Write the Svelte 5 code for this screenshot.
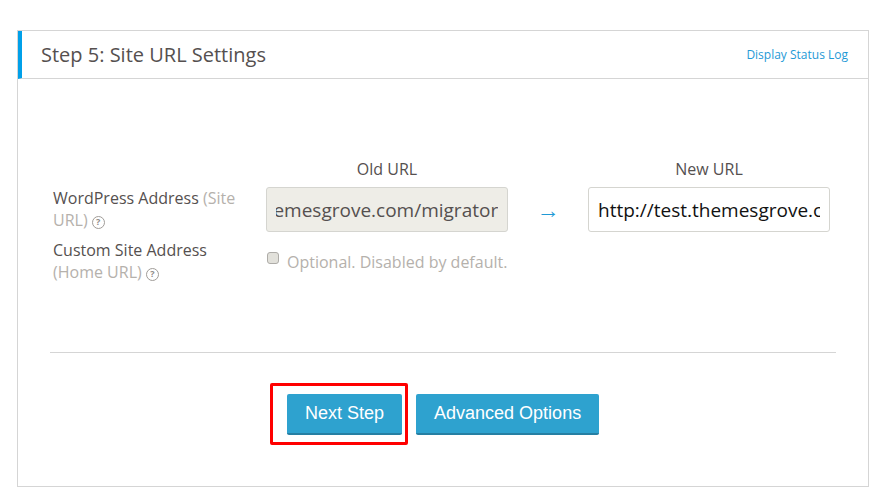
<script>
    import { onMount } from "svelte";

    let oldInput;

    onMount(() => {
        oldInput.scrollLeft = oldInput.scrollWidth;
    });
</script>

<main class="panel">
    <header>
        <h2>Step 5: Site URL Settings</h2>
        <a href="#log" class="log">Display Status Log</a>
    </header>

    <div class="body">
        <div class="form">
            <div class="col-heads">
                <span class="head old">Old URL</span>
                <span class="head new">New URL</span>
            </div>
            <div class="row first">
                <div class="label">
                    WordPress Address <span class="muted">(Site</span>
                    <span class="muted">URL)</span>
                    <span class="help">?</span>
                </div>
                <input
                    class="url readonly"
                    bind:this={oldInput}
                    readonly
                    value="http://test.themesgrove.com/migrator"
                />
                <span class="arrow">→</span>
                <input class="url" value="http://test.themesgrove.com" />
            </div>
            <div class="row second">
                <div class="label">
                    Custom Site Address <span class="muted">(Home URL)</span>
                    <span class="help">?</span>
                </div>
                <label class="optional">
                    <input type="checkbox" />
                    <span>Optional. Disabled by default.</span>
                </label>
            </div>
        </div>

        <hr />

        <div class="actions">
            <div class="highlight">
                <button>Next Step</button>
            </div>
            <button>Advanced Options</button>
        </div>
    </div>
</main>

<style>
    :global(body) {
        background: #fff;
        font-family: "Open Sans", sans-serif;
    }

    .panel {
        box-sizing: border-box;
        width: 852px;
        height: 457px;
        margin: 30px 0 0 17px;
        border: 1px solid #d5d5d5;
    }

    header {
        box-sizing: border-box;
        height: 48px;
        display: flex;
        align-items: center;
        justify-content: space-between;
        border-left: 4px solid #00a0e9;
        border-bottom: 1px solid #d5d5d5;
        padding: 0 20px 0 19px;
    }

    h2 {
        margin: 0;
        font-size: 20px;
        font-weight: 400;
        color: #55504f;
    }

    .log {
        font-size: 12px;
        color: #1f9ad6;
        text-decoration: none;
    }

    .body {
        padding: 0 32px;
    }

    .form {
        padding: 77px 6px 0 3px;
        height: 196px;
    }

    .col-heads {
        display: flex;
        height: 31px;
        padding-left: 213px;
        font-size: 16px;
        line-height: 27px;
        color: #55504f;
    }

    .head {
        width: 242px;
        text-align: center;
    }

    .head.new {
        margin-left: 80px;
    }

    .row {
        display: flex;
        align-items: flex-start;
    }

    .row.first {
        height: 52px;
    }

    .label {
        width: 213px;
        font-size: 16px;
        line-height: 22px;
        color: #55504f;
        flex: none;
        padding-right: 20px;
        box-sizing: border-box;
    }

    .muted {
        color: #b5b1ac;
    }

    .help {
        display: inline-block;
        box-sizing: border-box;
        width: 13px;
        height: 13px;
        border: 1.5px solid #a09c98;
        border-radius: 50%;
        font-size: 9px;
        font-weight: 700;
        line-height: 10px;
        text-align: center;
        color: #8f8b87;
        vertical-align: 1px;
    }

    .url {
        box-sizing: border-box;
        width: 242px;
        height: 45px;
        padding: 0 9px;
        border: 1px solid #d5d5d0;
        border-radius: 3px;
        background: #fff;
        font-family: "Open Sans", sans-serif;
        font-size: 19px;
        color: #111;
        outline: none;
    }

    .url.readonly {
        background: #eeede7;
        color: #55504f;
    }

    .arrow {
        width: 80px;
        flex: none;
        text-align: center;
        font-family: "Liberation Sans", sans-serif;
        font-size: 23px;
        line-height: 46px;
        color: #1f9ad6;
    }

    .optional {
        display: flex;
        align-items: flex-start;
        gap: 8px;
        padding: 12px 0 0 1px;
        font-size: 16px;
        line-height: 22px;
        color: #b5b1ac;
    }

    .optional input {
        appearance: none;
        box-sizing: border-box;
        width: 12px;
        height: 12px;
        margin: 1px 0 0;
        flex: none;
        background: #e2e1db;
        border: 1px solid #aeaca8;
        border-radius: 3px;
    }

    hr {
        margin: 0;
        border: 0;
        border-top: 1px solid #d5d5d5;
    }

    .actions {
        display: flex;
        gap: 14px;
        padding: 41px 0 0 237px;
    }

    .highlight {
        position: relative;
    }

    .highlight::after {
        content: "";
        position: absolute;
        left: -17px;
        top: -11px;
        width: 138px;
        height: 62px;
        box-sizing: border-box;
        border: 3px solid #f00;
        border-radius: 2px;
        pointer-events: none;
    }

    button {
        box-sizing: border-box;
        height: 41px;
        padding: 0 18px;
        border: 0;
        border-bottom: 2px solid #267fa3;
        border-radius: 2px;
        background: #2ea2cf;
        color: #fff;
        font-family: "Liberation Sans", Arial, sans-serif;
        font-size: 18px;
    }
</style>
